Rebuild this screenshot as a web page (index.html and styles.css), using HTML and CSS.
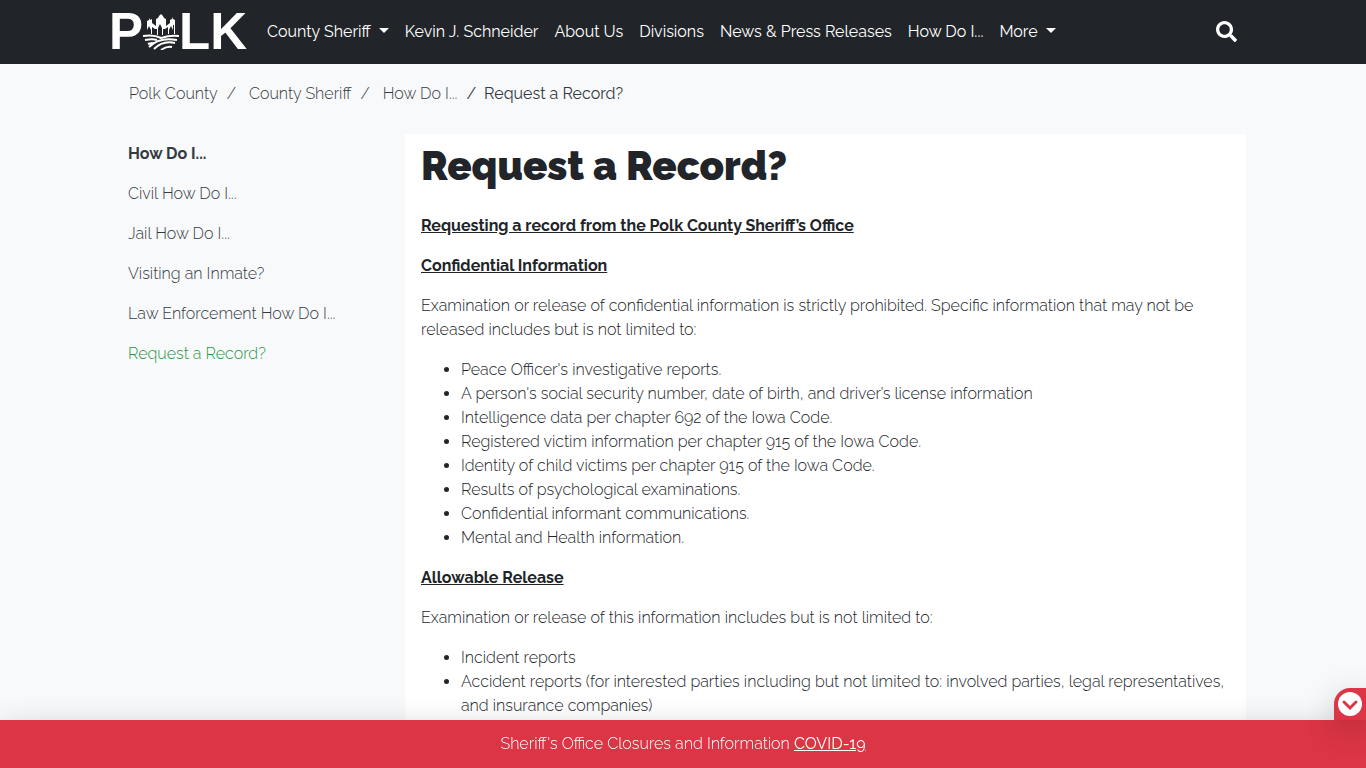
FILE: index.html
```html
<!DOCTYPE html>
<html lang="en">
<head>
<meta charset="utf-8">
<meta name="viewport" content="width=device-width, initial-scale=1">
<title>Request a Record? - Polk County Sheriff</title>
<link rel="stylesheet" href="styles.css">
</head>
<body>
<header class="topbar">
  <div class="container topbar-inner">
    <a class="brand" href="#" aria-label="Polk County home">
      <span>P</span>
      <svg class="brand-mark" viewBox="0 0 36 36" aria-hidden="true">
        <path fill="#fff" d="M4 20V7l2-1V4l1 2 2-1v4l4 3V5l2-1 1-2 2-2 2 2 1 2 2 1v7l4-3V6l2-1V3l1 2 2 1v14h-1v-9h-1v5l-2-4-2 4v4h-1v-7l-3 2h-2v6h-1v-7l-2-4-2 4v7h-1v-6h-2l-3-2v7h-1v-4l-2-4-2 4v4z"/>
        <g fill="none" stroke="#fff" stroke-width="2">
          <path d="M0 22c7-1 12-1 18 2 6-2 11-3 18-2"/>
          <path d="M2 26c5-1 9-1 12 0M5 30c2-1 4-1 6-1M6 33c8-8 17-9 28-7M11 35c6-6 13-8 21-6M18 36c4-3 7-4 11-3"/>
        </g>
      </svg>
      <span>LK</span>
    </a>
    <nav class="main-nav" aria-label="Main">
      <a class="has-menu" href="#">County Sheriff</a>
      <a href="#">Kevin J. Schneider</a>
      <a href="#">About Us</a>
      <a href="#">Divisions</a>
      <a href="#">News &amp; Press Releases</a>
      <a href="#">How Do I...</a>
      <a class="has-menu" href="#">More</a>
    </nav>
    <button class="search" type="button" aria-label="Search">
      <svg viewBox="0 0 512 512" aria-hidden="true"><path fill="#fff" d="M505 442.700 405.300 343c-4.500-4.500-10.600-7-17-7H372c27.600-35.300 44-79.700 44-128C416 93.100 322.900 0 208 0S0 93.100 0 208s93.100 208 208 208c48.300 0 92.700-16.400 128-44v16.300c0 6.400 2.500 12.500 7 17l99.700 99.700c9.400 9.400 24.600 9.400 33.900 0l28.300-28.300c9.400-9.400 9.400-24.600.1-34zM208 336c-70.700 0-128-57.200-128-128 0-70.700 57.200-128 128-128 70.700 0 128 57.200 128 128 0 70.700-57.200 128-128 128z"/></svg>
    </button>
  </div>
</header>

<div class="container page">
  <nav aria-label="Breadcrumb">
    <ol class="breadcrumb">
      <li><a href="#">Polk County</a></li>
      <li><a href="#">County Sheriff</a></li>
      <li><a href="#">How Do I...</a></li>
      <li class="current" aria-current="page">Request a Record?</li>
    </ol>
  </nav>
  <div class="columns">
    <nav class="side" aria-label="Section">
      <a class="side-title" href="#">How Do I...</a>
      <a href="#">Civil How Do I...</a>
      <a href="#">Jail How Do I...</a>
      <a href="#">Visiting an Inmate?</a>
      <a href="#">Law Enforcement How Do I...</a>
      <a class="active" href="#">Request a Record?</a>
    </nav>
    <main class="card">
      <h1>Request a Record?</h1>
      <h2>Requesting a record from the Polk County Sheriff’s Office</h2>
      <h2>Confidential Information</h2>
      <p>Examination or release of confidential information is strictly prohibited. Specific information that may not be released includes but is not limited to:</p>
      <ul>
        <li>Peace Officer's investigative reports.</li>
        <li>A person's social security number, date of birth, and driver’s license information</li>
        <li>Intelligence data per chapter 692 of the Iowa Code.</li>
        <li>Registered victim information per chapter 915 of the Iowa Code.</li>
        <li>Identity of child victims per chapter 915 of the Iowa Code.</li>
        <li>Results of psychological examinations.</li>
        <li>Confidential informant communications.</li>
        <li>Mental and Health information.</li>
      </ul>
      <h2>Allowable Release</h2>
      <p>Examination or release of this information includes but is not limited to:</p>
      <ul>
        <li>Incident reports</li>
        <li>Accident reports (for interested parties including but not limited to: involved parties, legal representatives, and insurance companies)</li>
      </ul>
    </main>
  </div>
</div>

<aside class="alert">
  <button class="alert-toggle" type="button" aria-label="Hide notice">
    <svg viewBox="0 0 24 24" aria-hidden="true"><circle cx="12" cy="12" r="12" fill="#fff"/><path d="m6 10 6 6 6-6" fill="none" stroke="#dc3545" stroke-width="3" stroke-linecap="round"/></svg>
  </button>
  <p>Sheriff's Office Closures and Information <a href="#">COVID-19</a></p>
</aside>
</body>
</html>
```
FILE: styles.css
```css
* { box-sizing: border-box; }

body {
  margin: 0;
  min-height: 100vh;
  display: flex;
  flex-direction: column;
  padding-bottom: 48px;
  background: #f8f9fb;
  color: #212529;
  font: 300 16px/24px Raleway, Lato, sans-serif;
}

a { color: inherit; text-decoration: none; }

.container {
  width: 100%;
  max-width: 1140px;
  margin: 0 auto;
}

.topbar { background: #212529; color: #fff; }

.topbar-inner {
  display: flex;
  align-items: center;
  min-height: 64px;
}

.brand {
  display: flex;
  align-items: center;
  font: 700 51px/64px "Liberation Sans", Arial, sans-serif;
  margin: 0 12px 0 -4px;
}

.brand-mark { width: 36px; height: 36px; }

.main-nav {
  display: flex;
  font-weight: 400;
}

.main-nav a { padding: 8px; white-space: nowrap; }

.has-menu::after {
  content: "";
  display: inline-block;
  margin-left: 8px;
  vertical-align: 4px;
  border: 5px solid transparent;
  border-top-color: currentColor;
  border-bottom: 0;
}

.search {
  margin-left: auto;
  margin-right: 16px;
  padding: 0 0 2px;
  border: 0;
  background: none;
  line-height: 0;
}

.search svg { width: 21px; height: 21px; }

.page {
  flex: 1;
  display: flex;
  flex-direction: column;
  padding: 0 7px 0 15px;
}

.breadcrumb {
  display: flex;
  margin: 0;
  padding: 18px 1px 28px;
  list-style: none;
  color: #343a40;
}

.breadcrumb li + li::before { content: "/"; padding: 0 13px 0 9px; }
.breadcrumb .current { font-weight: 400; }
.breadcrumb li.current::before { padding-right: 8px; }

.columns {
  flex: 1;
  display: grid;
  grid-template-columns: 277px 1fr;
}

.side {
  display: flex;
  flex-direction: column;
  gap: 16px;
  padding-top: 8px;
  color: #343a40;
}

.side-title { font-weight: 700; }
.side .active { color: #28963f; }

.card { background: #fff; padding: 8px 16px 0; }

h1 {
  margin: 0 0 24px;
  font-size: 40px;
  line-height: 48px;
  font-weight: 900;
}

h2 {
  margin: 0 0 16px;
  font-size: 16px;
  line-height: 24px;
  font-weight: 700;
  text-decoration: underline;
}

p { margin: 0 0 16px; }

ul { margin: 0 0 16px; padding-left: 40px; }
.card ul:last-child { margin-bottom: 0; }

.alert {
  position: fixed;
  right: 0;
  bottom: 0;
  left: 0;
  padding: 12px 16px;
  background: #dc3545;
  color: #fff;
  text-align: center;
  box-shadow: 0 8px 32px rgba(0, 0, 0, 0.2);
}

.alert p { margin: 0; }
.alert a { text-decoration: underline; font-weight: 400; }

.alert-toggle {
  position: absolute;
  right: 0;
  bottom: 100%;
  width: 32px;
  height: 32px;
  padding: 4px;
  border: 0;
  border-radius: 16px 0 0 0;
  background: #dc3545;
  line-height: 0;
  box-shadow: 0 8px 32px rgba(0, 0, 0, 0.2);
}

.alert-toggle svg { width: 24px; height: 24px; }
```
